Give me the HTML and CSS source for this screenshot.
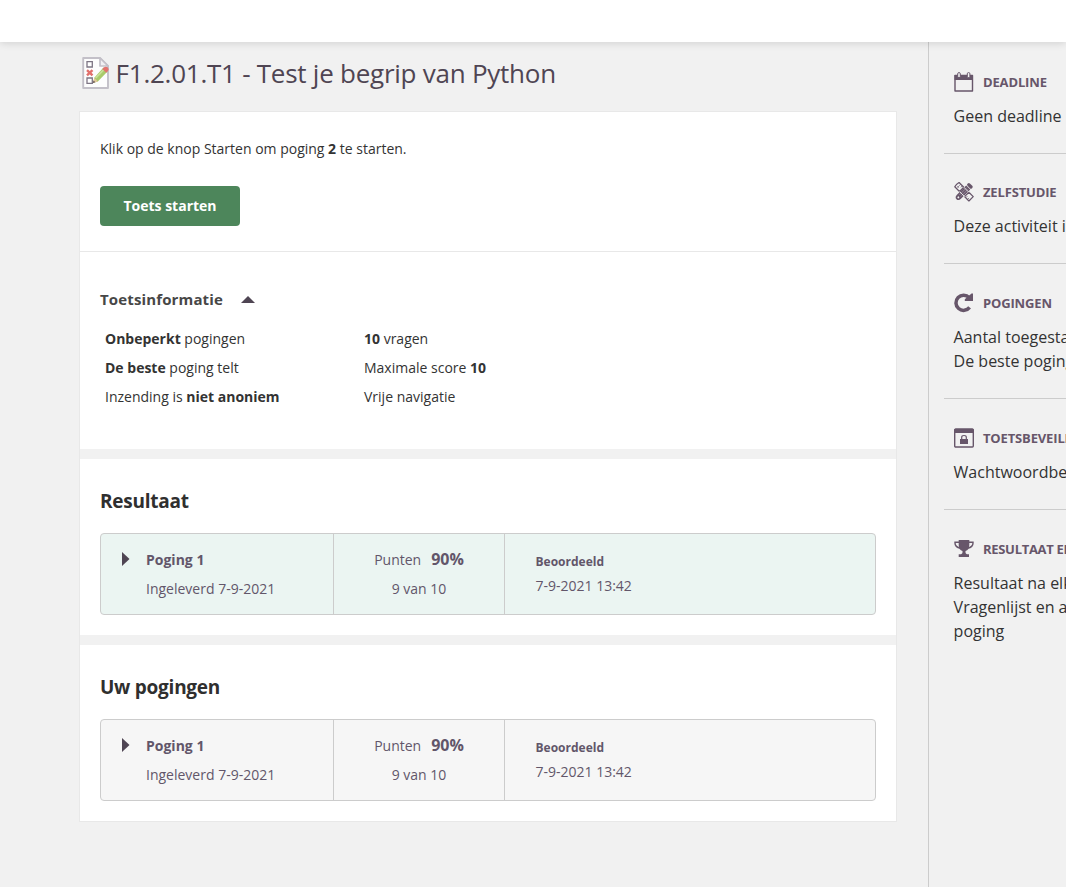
FILE: index.html
```html
<!DOCTYPE html>
<html lang="nl">
<head>
<meta charset="utf-8">
<title>F1.2.01.T1 - Test je begrip van Python</title>
<link rel="stylesheet" href="styles.css">
</head>
<body>
<div class="page">
  <header class="topbar"></header>
  <div class="layout">
    <main class="main">
      <h1 class="title">
        <svg class="title-icon" width="28" height="34" viewBox="0 0 28 34">
          <path d="M1.200 2H18L26 10V32H1.200Z" fill="#fdfdfd" stroke="#c3c0c8" stroke-width="1.900" stroke-linejoin="round"/>
          <path d="M18 2V10H26Z" fill="#f1f0f3" stroke="#c3c0c8" stroke-width="1.700" stroke-linejoin="round"/>
          <g fill="#fff" stroke="#7d7584" stroke-width="1.300"><path d="M5 5.700H10.300V11H5Z"/><path d="M5 22H10.300V27.300H5Z"/></g>
          <path d="M5 14.200L10.500 19.400M10.500 14.200L5 19.400" stroke="#e2706c" stroke-width="2.400"/>
          <path d="M21.500 11.500L25.500 15.500L15.800 25.600L11 27L12.500 21.500Z" fill="#a9cb6a"/>
          <path d="M21.800 13.600L13.700 22" stroke="#c9e198" stroke-width="1.700"/>
          <path d="M12.400 21.700L15.800 25.500L11 27Z" fill="#e2c79b"/><path d="M11.700 24.500L13.200 26.300L10.700 27Z" fill="#5d4d55"/>
          <path d="M20.300 13L22 11.300Q24 10 25.900 11.600Q27.500 13.300 26 15L24.300 16.700Z" fill="#e3726e"/>
        </svg>
        <span>F1.2.01.T1 - Test je begrip van Python</span>
      </h1>
      <div class="card">
        <section class="start">
          <p class="intro">Klik op de knop Starten om poging <b>2</b> te starten.</p>
          <button class="button" type="button">Toets starten</button>
        </section>
        <section class="info">
          <h3 class="info-title">Toetsinformatie
            <svg width="14" height="7" viewBox="0 0 14 7"><path d="M0 7L7 0L14 7Z" fill="#4f4553"/></svg>
          </h3>
          <div class="info-grid">
            <span><b>Onbeperkt</b> pogingen</span><span><b>10</b> vragen</span>
            <span><b>De beste</b> poging telt</span><span>Maximale score <b>10</b></span>
            <span>Inzending is <b>niet anoniem</b></span><span>Vrije navigatie</span>
          </div>
        </section>
        <section class="results">
          <h2 class="section-title">Resultaat</h2>
          <div class="attempt attempt-final">
            <div class="attempt-name">
              <svg class="arrow" width="8" height="14" viewBox="0 0 8 14"><path d="M0 0L7.500 7L0 14Z" fill="#4f4553"/></svg>
              <div><b>Poging 1</b><br>Ingeleverd 7-9-2021</div>
            </div>
            <div class="attempt-score"><div class="points">Punten <b>90%</b></div><div>9 van 10</div></div>
            <div class="attempt-status"><b>Beoordeeld</b><span>7-9-2021 13:42</span></div>
          </div>
        </section>
        <section class="results">
          <h2 class="section-title">Uw pogingen</h2>
          <div class="attempt">
            <div class="attempt-name">
              <svg class="arrow" width="8" height="14" viewBox="0 0 8 14"><path d="M0 0L7.500 7L0 14Z" fill="#4f4553"/></svg>
              <div><b>Poging 1</b><br>Ingeleverd 7-9-2021</div>
            </div>
            <div class="attempt-score"><div class="points">Punten <b>90%</b></div><div>9 van 10</div></div>
            <div class="attempt-status"><b>Beoordeeld</b><span>7-9-2021 13:42</span></div>
          </div>
        </section>
      </div>
    </main>
    <aside class="sidebar">
      <section class="side-item side-item-deadline">
        <h4 class="side-title">
          <svg width="20" height="20" viewBox="0 0 20 20"><path d="M1 3.500H18.500V19H1Z" fill="none" stroke="#67566a" stroke-width="1.400" stroke-linejoin="round"/><path d="M.5 3H19V8H.5Z" fill="#67566a"/><g fill="#f1f1f1" stroke="#67566a"><rect x="3.700" y=".6" width="2.600" height="5" rx="1.200"/><rect x="13.300" y=".6" width="2.600" height="5" rx="1.200"/></g></svg>
          Deadline</h4>
        <p>Geen deadline</p>
      </section>
      <section class="side-item side-item-study">
        <h4 class="side-title">
          <svg width="20" height="20" viewBox="-.5 -.2 21 21"><g transform="rotate(-45 10 10)"><path d="M-1.200 10Q-1 7 2.500 7H16.300V13H2.500Q-1 13 -1.200 10Z" fill="#67566a"/><rect x="17" y="6.700" width="3.500" height="6.600" rx="1.500" fill="#67566a"/><path d="M4 9H15M4 11.200H15" stroke="#b5adb7" stroke-width=".6"/><circle cx="1.600" cy="10" r="1" fill="#f1f1f1"/></g><g transform="rotate(45 10 10)"><path d="M-.5 6.800H6.500V13.200H-.5Q-1.500 10 -.5 6.800ZM14 6.800H20.500V13.200H14Z" fill="#f1f1f1" stroke="#67566a" stroke-width="1.300" stroke-linejoin="round"/><path d="M6.500 6.800H14M6.500 13.200H14" stroke="#f1f1f1" stroke-width=".9"/><path d="M2 7V9M4.500 7V9M15.800 13V11M18.200 13V11" stroke="#67566a" stroke-width=".9"/><circle cx="2" cy="10.800" r=".8" fill="#67566a"/></g></svg>
          Zelfstudie</h4>
        <p>Deze activiteit is een zelfstudie</p>
      </section>
      <section class="side-item">
        <h4 class="side-title">
          <svg width="20" height="20" viewBox="0 .5 20 20"><path d="M15.200 5.200A7.600 7.600 0 1 0 15.600 14.900" fill="none" stroke="#67566a" stroke-width="3.500"/><path d="M19 1V8.500H10.800V6.800L17.500 1Z" fill="#67566a"/></svg>
          Pogingen</h4>
        <p>Aantal toegestane pogingen: onbeperkt<br>De beste poging telt</p>
      </section>
      <section class="side-item">
        <h4 class="side-title">
          <svg width="20" height="20" viewBox="0 0 20 20"><rect x=".7" y="1.200" width="18.600" height="17.800" rx="1" fill="none" stroke="#67566a" stroke-width="1.400"/><path d="M0 2Q0 .5 1.500 .5H18.500Q20 .5 20 2V5H0Z" fill="#67566a"/><path d="M6 11H14V16H6Z" fill="#67566a"/><path d="M7.700 11V9.200Q7.700 7.500 10 7.500T12.300 9.200V11" fill="none" stroke="#67566a" stroke-width="1.200"/></svg>
          Toetsbeveiliging</h4>
        <p>Wachtwoordbeveiliging</p>
      </section>
      <section class="side-item">
        <h4 class="side-title side-title-result">
          <svg width="20" height="20" viewBox="0 0 20 20"><path d="M4.700 1H15.300V6Q15.300 10.800 11.500 12V13.500Q11.500 14.700 13 15.200H15V18H4.700V15.200H7Q8.500 14.700 8.500 13.500V12Q4.700 10.800 4.700 6Z" fill="#67566a"/><path d="M5 3.300H1Q.6 8.200 6.500 9.200M15 3.300H19Q19.400 8.200 13.500 9.200" fill="none" stroke="#67566a" stroke-width="1.400"/></svg>
          Resultaat en inzage</h4>
        <p>Resultaat na elke poging<br>Vragenlijst en antwoorden na<br>poging</p>
      </section>
    </aside>
  </div>
</div>
</body>
</html>
```
FILE: styles.css
```css
* { box-sizing: border-box; }
body { margin: 0; font-family: "Open Sans", "Noto Sans", sans-serif; font-size: 14px; line-height: 29px; color: #333; background: #f1f1f1; }
h1, h2, h3, h4, p { margin: 0; }
svg { flex: none; display: block; }
.page { height: 887px; overflow: hidden; display: flex; flex-direction: column; }
.topbar { height: 42px; flex: none; background: #fff; box-shadow: 0 1px 8px rgba(0,0,0,.14); z-index: 1; }
.layout { flex: 1; display: grid; grid-template-columns: 928px 320px; }
.main { padding: 14px 31px 0 79px; }
.title { display: flex; align-items: center; gap: 6px; height: 34px; margin: 0 0 21px 2.600px; font-size: 26px; line-height: 34px; font-weight: 400; letter-spacing: -.25px; color: #4f4553; }
.card { width: 818px; border: 1px solid #e8e8e8; background: #fff; }
.start { height: 140px; padding: 22px 20px 0; border-bottom: 1px solid #e8e8e8; }
.intro { margin-bottom: 23px; }
.button { display: block; width: 140px; height: 40px; padding: 0; border: 0; border-radius: 4px; background: #4d865b; color: #fff; font: 700 14px/40px "Open Sans", sans-serif; }
.info { height: 197px; padding: 33px 20px 0; }
.info-title { display: flex; align-items: center; gap: 18px; font-size: 15px; letter-spacing: .14px; color: #474747; }
.info-title svg { margin-top: -1px; }
.info-grid { display: grid; grid-template-columns: 259px 1fr; padding: 10px 5px 0; }
.results { height: 186px; padding: 27px 20px 0; border-top: 10px solid #f1f1f1; }
.section-title { font-size: 19px; line-height: 30px; font-weight: 700; letter-spacing: -.25px; margin-bottom: 17px; color: #2f2f2f; }
.attempt { display: grid; grid-template-columns: 233px 171px 1fr; height: 82px; border: 1px solid #ccc; border-radius: 4px; background: #f6f6f6; color: #62566a; }
.attempt-final { background: #ebf5f2; }
.attempt-name { display: flex; gap: 16px; padding: 11px 0 0 21px; border-right: 1px solid #ccc; }
.arrow { margin-top: 7px; }
.attempt-score { padding-top: 11px; border-right: 1px solid #ccc; text-align: center; }
.points { display: flex; justify-content: center; gap: 10px; }
.points b { font-size: 16px; }
.attempt-status { display: flex; flex-direction: column; padding: 16px 0 0 30.5px; line-height: 24px; }
.attempt-status b { font-size: 12px; }
.sidebar { padding-left: 15px; border-left: 1px solid #ccc; white-space: nowrap; }
.side-item { padding: 27px 0 25px 9.6px; border-bottom: 1px solid #ccc; font-size: 16px; line-height: 24px; color: #333; }
.side-item-deadline { padding-top: 28px; }
.side-item-study { padding-top: 26px; }
.side-item:last-child { border-bottom: 0; }
.side-title { display: flex; align-items: center; gap: 9.400px; height: 24px; margin-bottom: 10px; font-size: 13px; font-weight: 700; letter-spacing: -.15px; text-transform: uppercase; color: #67566a; }
.side-title-result { letter-spacing: -.3px; }
```
